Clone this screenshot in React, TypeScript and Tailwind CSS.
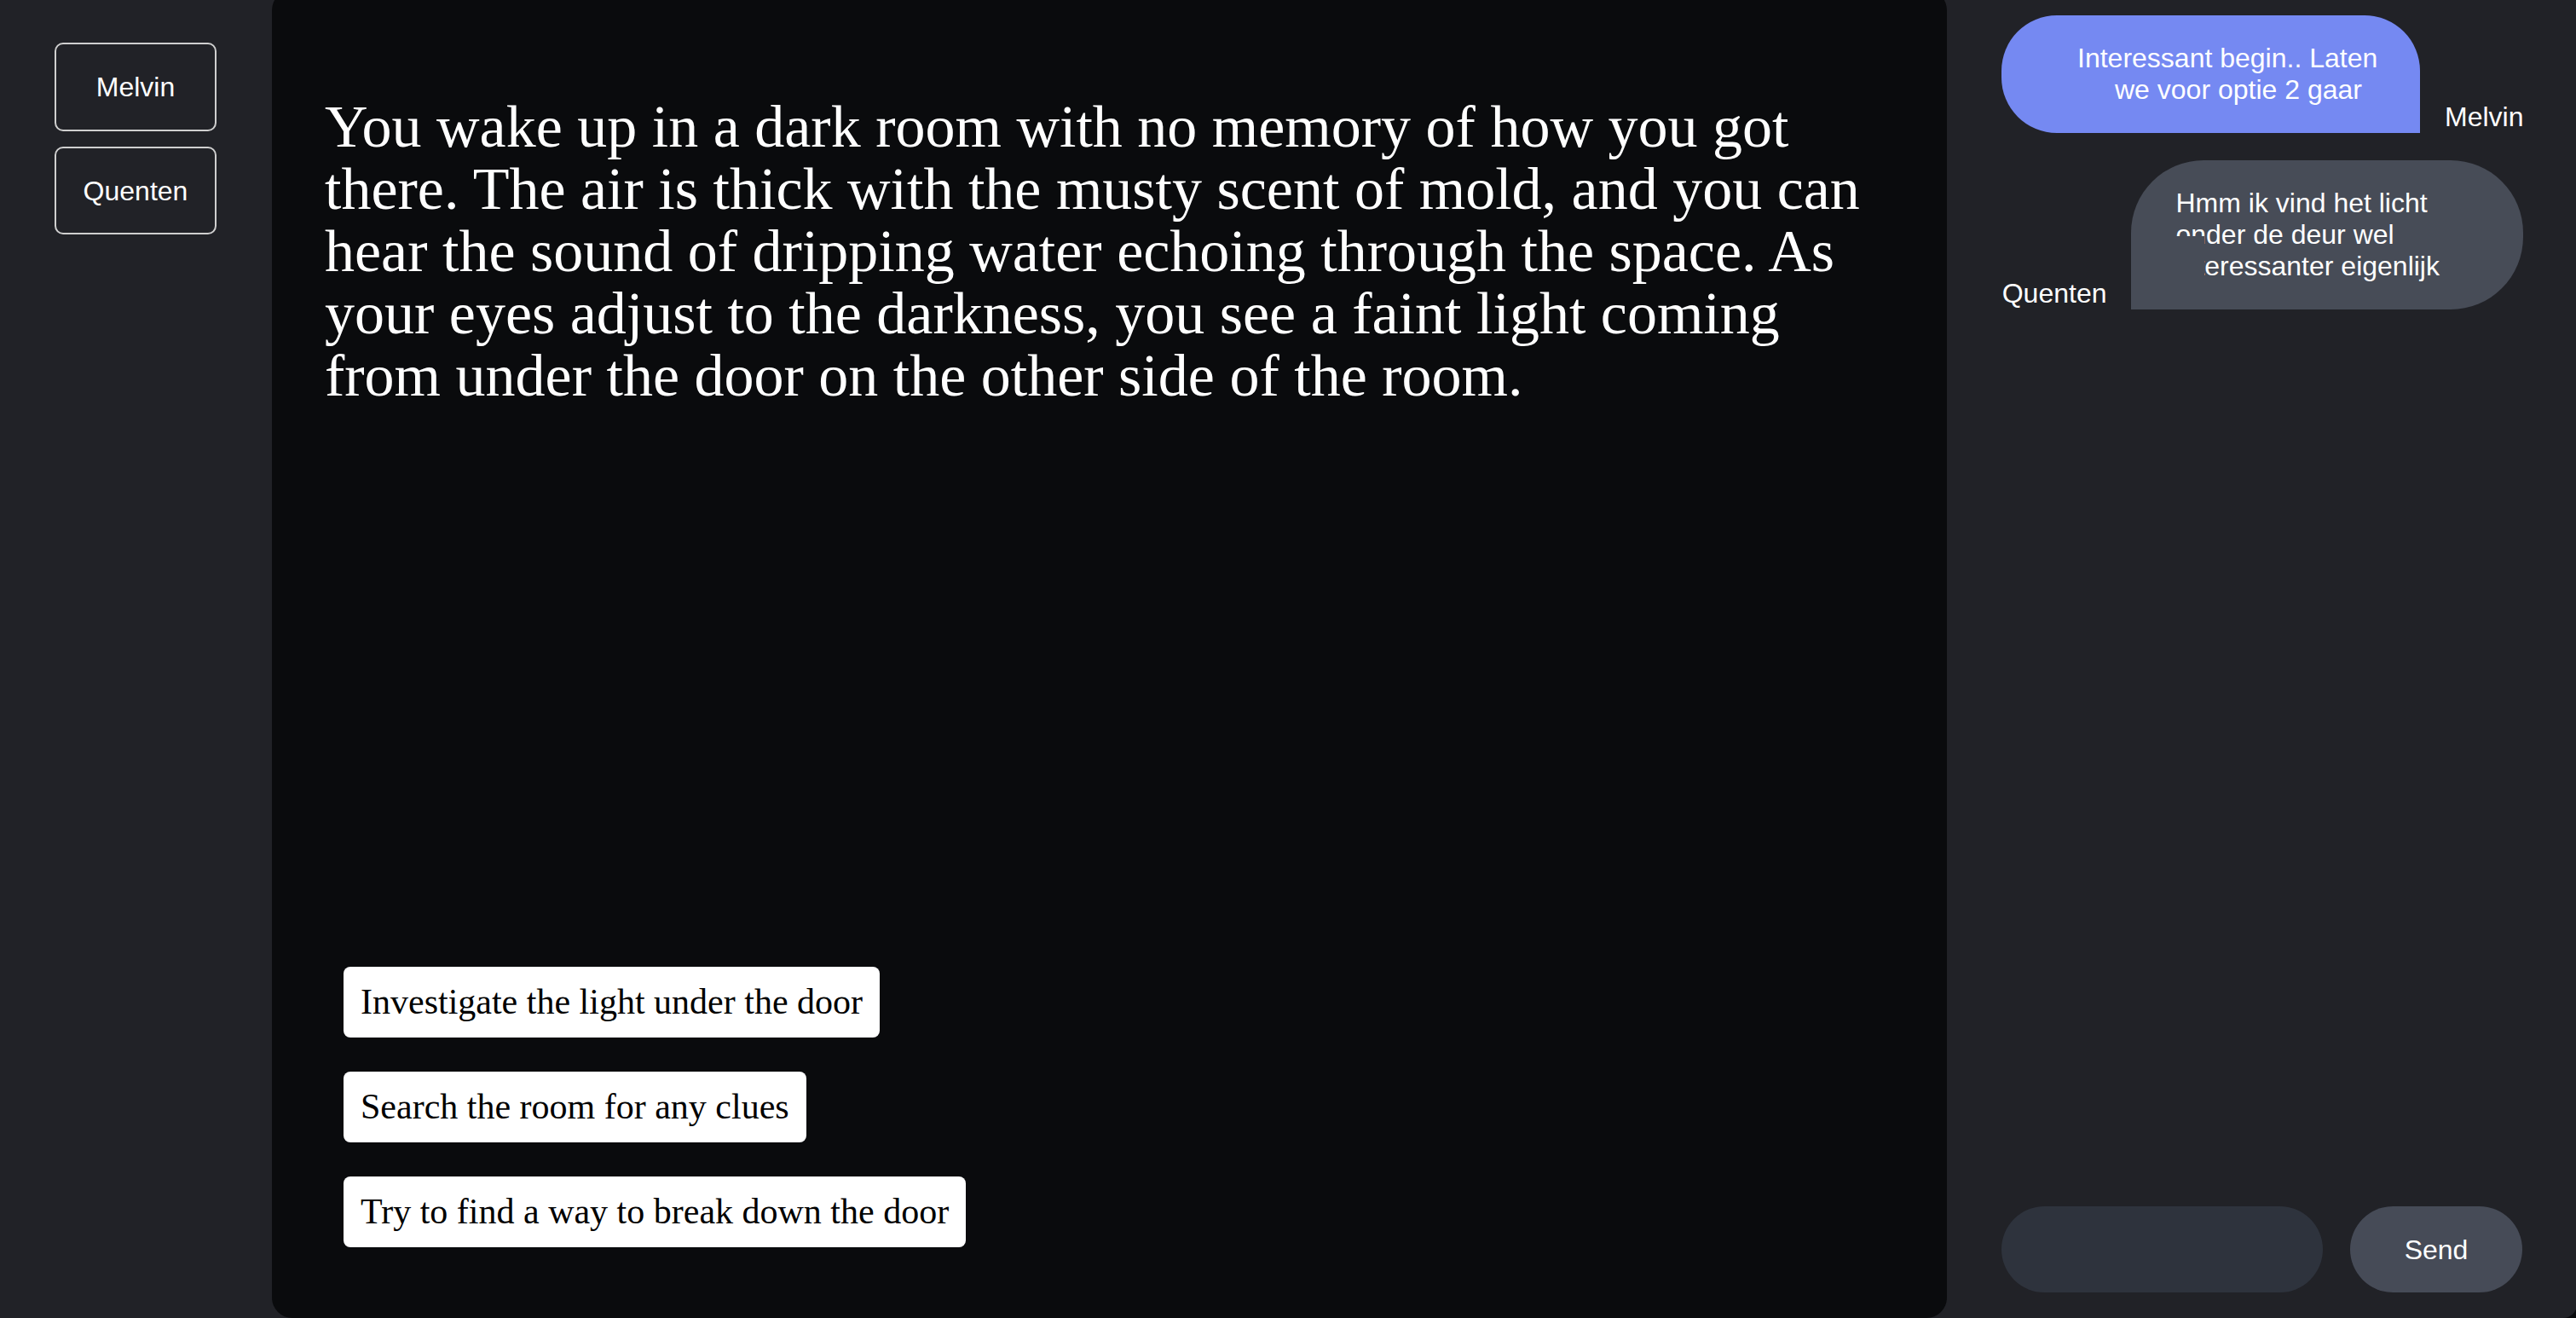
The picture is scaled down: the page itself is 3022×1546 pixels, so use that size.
export default function App() {
  const sans = "font-['Liberation_Sans',Arial,sans-serif]";
  const serif = "font-['Liberation_Serif','Times_New_Roman',serif]";
  return (
    <div className={`w-[3022px] h-[1546px] overflow-hidden bg-[#212227] flex ${sans}`}>
      {/* Sidebar */}
      <div className="w-[319px] shrink-0 pl-[64px] pt-[50px] flex flex-col gap-[18px]">
        <button className="w-[190px] h-[104px] border-2 border-[#cfcfcf] rounded-[10px] text-white text-[32px] flex items-center justify-center">
          Melvin
        </button>
        <button className="w-[190px] h-[103px] border-2 border-[#cfcfcf] rounded-[10px] text-white text-[32px] flex items-center justify-center">
          Quenten
        </button>
      </div>

      {/* Main story panel */}
      <div className="w-[1965px] shrink-0 h-[1558px] -mt-[12px] rounded-[24px] bg-[#0a0b0d] flex flex-col justify-between pl-[62px] pr-[62px] pt-[124px] pb-[83px]">
        <p className={`${serif} text-white text-[70px] leading-[73px] whitespace-nowrap`}>
          You wake up in a dark room with no memory of how you got
          <br />
          there. The air is thick with the musty scent of mold, and you can
          <br />
          hear the sound of dripping water echoing through the space. As
          <br />
          your eyes adjust to the darkness, you see a faint light coming
          <br />
          from under the door on the other side of the room.
        </p>
        <div className="flex flex-col items-start gap-[40px] ml-[22px]">
          {[
            "Investigate the light under the door",
            "Search the room for any clues",
            "Try to find a way to break down the door",
          ].map((t) => (
            <button
              key={t}
              className={`${serif} h-[83px] px-[20px] bg-white rounded-[8px] text-black text-[42px] flex items-center whitespace-nowrap`}
            >
              {t}
            </button>
          ))}
        </div>
      </div>

      {/* Chat */}
      <div className="flex-1 bg-[#0a0b0d]">
        <div className="h-full bg-[#212227] rounded-br-[16px] pl-[64px] pr-[63px] pt-[18px] pb-[30px] flex flex-col justify-between">
          <div className="flex flex-col gap-[32px] text-white text-[32px] leading-[37px]">
            <div className="flex justify-end items-end gap-[29px]">
              <div className="w-[491px] rounded-[65px] rounded-br-none bg-[#7589f2] py-[32px] whitespace-nowrap">
                <div className="pl-[89px]">Interessant begin.. Laten</div>
                <div className="pl-[133px]">we voor optie 2 gaar</div>
              </div>
              <span>Melvin</span>
            </div>
            <div className="flex justify-end items-end gap-[29px]">
              <span>Quenten</span>
              <div className="relative w-[460px] rounded-[85px] rounded-bl-none bg-[#474c57] pl-[52px] py-[32px] whitespace-nowrap">
                <div>Hmm ik vind het licht</div>
                <div>onder de deur wel</div>
                <div>interessanter eigenlijk</div>
                <div className="absolute left-[44px] top-[89px] w-[42px] h-[63px] bg-[#474c57]" />
              </div>
            </div>
          </div>
          <div className="flex gap-[32px] h-[101px]">
            <div className="w-[377px] h-full rounded-full bg-[#2e333d]" />
            <button className="w-[202px] h-full rounded-full bg-[#464b57] text-white text-[32px] flex items-center justify-center">
              Send
            </button>
          </div>
        </div>
      </div>
    </div>
  );
}
